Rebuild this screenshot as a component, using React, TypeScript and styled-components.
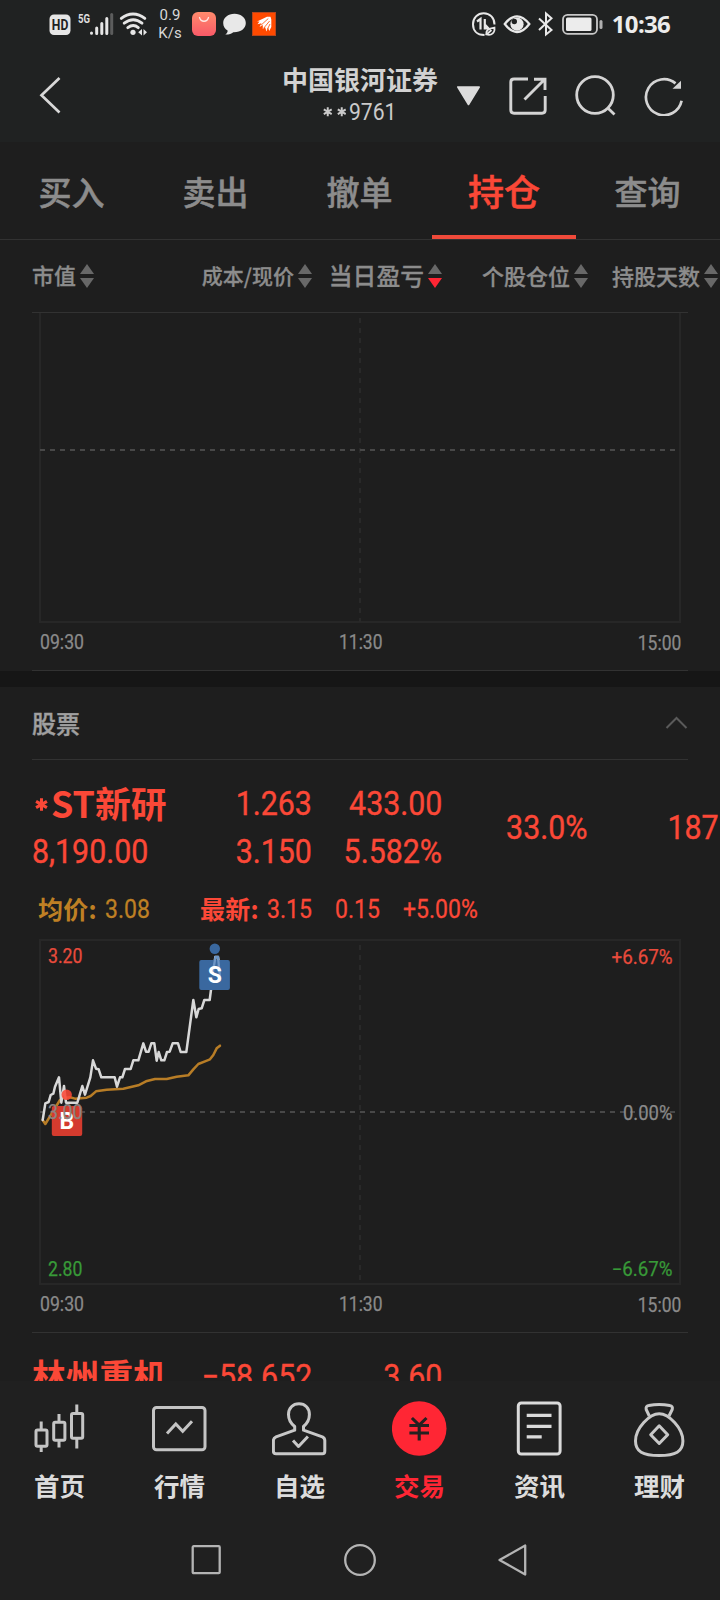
import React from "react";
import styled, { createGlobalStyle } from "styled-components";

const Global = createGlobalStyle`
  * { box-sizing: border-box; }
  html, body { margin: 0; padding: 0; background: #1e1e1e; }
  body { font-family: "Noto Sans CJK SC", sans-serif; overflow: hidden; }
  svg { display: block; flex: none; }
`;

const RED = "#fb4837";
const HOT = "#ff2634";
const NUM = `Roboto, "Noto Sans CJK SC", sans-serif`;

const Screen = styled.div`
  width: 720px;
  height: 1600px;
  display: flex;
  flex-direction: column;
  overflow: hidden;
  background: #1e1e1e;
  color: #8c8c8c;
`;

const StatusBar = styled.div`
  height: 48px;
  flex: none;
  display: flex;
  align-items: center;
  justify-content: space-between;
  padding: 0 50px 0 49px;
  background: #202222;
`;

const StatusGroup = styled.div`
  display: flex;
  align-items: center;
`;

const NetSpeed = styled.div`
  width: 24px;
  margin: 0 9px 0 11px;
  font: 400 15px/18px ${NUM};
  text-align: center;
  color: #d8d8d8;
`;

const Clock = styled.span`
  margin-left: 8px;
  font: 700 24px/28px "Noto Sans", sans-serif;
  letter-spacing: -0.7px;
  color: #ececec;
`;

const Header = styled.div`
  height: 94px;
  flex: none;
  display: flex;
  align-items: center;
  padding: 0 37px 0 38px;
  background: #202222;
`;

const Account = styled.div`
  width: 158px;
  margin-left: 219px;
  margin-right: 17px;
  padding-top: 1px;
  display: flex;
  flex-direction: column;
  align-items: center;
  white-space: nowrap;
`;

const Broker = styled.div`
  font-size: 26px;
  line-height: 32px;
  font-weight: 700;
  color: #d2d2d2;
`;

const AccountNo = styled.div`
  display: flex;
  align-items: center;
  gap: 4px;
  font: 400 24px/32px ${NUM};
  color: #cacaca;
  padding-top: 1px;
`;

const AccountDigits = styled.span`
  display: block;
  margin-left: -1px;
  margin-right: -6px;
  transform: scaleX(0.88);
  transform-origin: left center;
`;

const HeaderActions = styled.div`
  flex: 1;
  display: flex;
  align-items: center;
  justify-content: space-between;
  padding-top: 1px;
`;

const Tabs = styled.div`
  height: 98px;
  flex: none;
  display: grid;
  grid-template-columns: repeat(5, 144px);
  border-bottom: 1px solid #323232;
`;

const Tab = styled.div<{ $active?: boolean }>`
  display: flex;
  align-items: center;
  justify-content: center;
  font-size: ${(p) => (p.$active ? 36 : 33)}px;
  font-weight: 500;
  -webkit-text-stroke: 0.5px currentColor;
  padding: ${(p) => (p.$active ? "2px 0 0 0" : "0 1px 0 0")};
  color: ${(p) => (p.$active ? RED : "#8c8c8c")};
  border-bottom: ${(p) => (p.$active ? "4px solid #f04a3a" : "none")};
`;

const SortRow = styled.div`
  height: 72px;
  flex: none;
  display: grid;
  grid-template-columns: 162px 118px 130px 146px 130px;
  padding-left: 32px;
  align-items: center;
`;

const SortCell = styled.div<{ $size: number; $left?: boolean }>`
  display: flex;
  align-items: center;
  justify-content: ${(p) => (p.$left ? "flex-start" : "flex-end")};
  gap: 4px;
  white-space: nowrap;
  font-size: ${(p) => p.$size}px;
  line-height: 32px;
  font-weight: 500;
  -webkit-text-stroke: 0.3px currentColor;
`;

const SortLabel = styled.span`
  padding-bottom: 2px;
`;

const Panel = styled.div`
  flex: none;
  margin: 0 32px;
`;

const LinedPanel = styled(Panel)`
  border-top: 1px solid #323232;
  border-bottom: 1px solid #323232;
`;

const Rule = styled.div`
  height: 1px;
  margin: 0 32px;
  background: #323232;
`;

const Divider = styled.div`
  height: 16px;
  flex: none;
  background: #161616;
`;

const SectionHead = styled.div`
  height: 73px;
  flex: none;
  margin: 0 32px;
  display: flex;
  align-items: center;
  justify-content: space-between;
  border-bottom: 1px solid #323232;
  font-size: 24px;
  line-height: 36px;
  font-weight: 500;
  color: #a0a0a0;
`;

const SectionTitle = styled.span`
  -webkit-text-stroke: 0.4px currentColor;
`;

const Holding = styled.div`
  height: 116px;
  flex: none;
  display: grid;
  grid-template-columns: 162px 118px 130px 146px 131px;
  padding: 20px 0 0 32px;
  color: ${RED};
`;

const HoldingCol = styled.div<{ $left?: boolean; $middle?: boolean }>`
  height: 96px;
  display: flex;
  flex-direction: column;
  align-items: ${(p) => (p.$left ? "flex-start" : "flex-end")};
  justify-content: ${(p) => (p.$middle ? "center" : "flex-start")};
  white-space: nowrap;
`;

const StockName = styled.div<{ $size: number }>`
  display: flex;
  height: 48px;
  font-size: ${(p) => p.$size}px;
  line-height: 44px;
  font-weight: 700;
`;

const Star = styled.span`
  width: 19px;
  display: flex;
  align-items: center;
  justify-content: center;
`;

const Figure = styled.div<{ $left?: boolean }>`
  font: 400 33px/48px ${NUM};
  transform: scaleX(0.92);
  transform-origin: ${(p) => (p.$left ? "left" : "right")} center;
  -webkit-text-stroke: 0.4px currentColor;
`;

const QuoteLine = styled.div`
  height: 60px;
  flex: none;
  display: flex;
  align-items: center;
  padding: 6px 0 0 38px;
`;

const Quote = styled.div<{ $color: string; $width: number }>`
  width: ${(p) => p.$width}px;
  display: flex;
  align-items: center;
  gap: 8px;
  color: ${(p) => p.$color};
  white-space: nowrap;
`;

const QuoteLabel = styled.span`
  font: 700 25px/36px "Noto Sans CJK SC", sans-serif;
  letter-spacing: 0.2px;
  padding-bottom: 3px;
`;

const QuoteValue = styled.span`
  display: block;
  font: 400 25px/36px ${NUM};
  transform: scaleX(0.92);
  transform-origin: left center;
  padding-top: 1px;
  -webkit-text-stroke: 0.3px currentColor;
`;

const NextHolding = styled.div`
  height: 49px;
  flex: none;
  overflow: hidden;
`;

const BottomNav = styled.div`
  height: 139px;
  flex: none;
  display: flex;
  background: #202020;
`;

const NavItem = styled.div<{ $active?: boolean }>`
  flex: 1;
  display: flex;
  flex-direction: column;
  align-items: center;
  padding: 17px 1px 0 0;
  font-size: 25.5px;
  line-height: 36px;
  font-weight: 700;
  gap: 9px;
  color: ${(p) => (p.$active ? HOT : "#dcdcdc")};
`;

const SystemNav = styled.div`
  height: 80px;
  flex: none;
  display: flex;
  align-items: center;
  justify-content: center;
  gap: 121px;
  background: #202020;
`;

function StarMark({ size, color, weight }: { size: number; color: string; weight: number }) {
  return (
    <svg width={size} height={size} viewBox="0 0 12 12" stroke={color} strokeWidth={weight}>
      <path d="M6 0.3V11.7M1 3.1L11 8.9M11 3.1L1 8.9" />
    </svg>
  );
}

function SortArrows({ down }: { down?: boolean }) {
  return (
    <svg width="14" height="24" viewBox="0 0 14 24">
      <path d="M7 0L14 10H0Z" fill="#686868" />
      <path d="M0 14H14L7 24Z" fill={down ? HOT : "#686868"} />
    </svg>
  );
}

function LeftStatusIcons() {
  return (
    <>
      <svg width="98" height="30" viewBox="49 9 98 30">
        <rect x="49.5" y="14.5" width="21" height="20.5" rx="4.5" fill="#e6e6e6" />
        <text x="51.8" y="30.3" fontFamily="Roboto" fontSize="14" fontWeight="700" fill="#202222" textLength="16.5" lengthAdjust="spacingAndGlyphs">HD</text>
        <text x="78" y="23.2" fontFamily="Roboto" fontSize="13.5" fontWeight="700" fill="#dedede" textLength="12" lengthAdjust="spacingAndGlyphs">5G</text>
        <g strokeWidth="3" strokeLinecap="round" stroke="#e6e6e6">
          <path d="M91.5 33V33.2M96.7 28V33.4M101.8 23.4V33.4M106.8 18.5V33.4" />
          <path d="M111.7 14.5V33.4" stroke="#5c5d5d" />
        </g>
        <g fill="none" stroke="#e6e6e6" strokeWidth="2.9" strokeLinecap="round">
          <path d="M121.3 18.4C128.5 12.5 137.5 12.5 144.8 18.4" />
          <path d="M124.2 23.2C130 18.8 136.5 18.8 142 23.2" />
          <path d="M127.8 27.6C131.5 24.8 135 24.8 138.3 27.6" />
        </g>
        <circle cx="133" cy="32.3" r="2.6" fill="#e6e6e6" />
        <path d="M142 29V35.5L138.2 32.2ZM143.5 29L147 32.2L143.5 35.5Z" fill="#e6e6e6" />
      </svg>
      <NetSpeed>0.9 K/s</NetSpeed>
      <svg width="86" height="26" viewBox="191 11 86 26">
        <defs>
          <linearGradient id="bag" x1="0" y1="0" x2="0" y2="1">
            <stop offset="0" stopColor="#ff8a6c" />
            <stop offset="1" stopColor="#f95a68" />
          </linearGradient>
        </defs>
        <rect x="192" y="12" width="24" height="24" rx="6" fill="url(#bag)" />
        <path d="M199.5 17.5C201 22.5 207 22.5 208.5 17.5" fill="none" stroke="#ffe9e4" strokeWidth="1.3" strokeLinecap="round" />
        <path d="M234.5 13.8C228 13.8 223.2 17.8 223.2 23C223.2 26.5 225 29 227.6 30.5C227.8 32.3 226.8 33.6 225.3 34.5C228.8 34.6 231.5 33.8 233.3 32.2C240.5 32.5 245.8 28.6 245.8 23C245.8 17.8 241 13.8 234.5 13.8Z" fill="#e8e8e8" />
        <rect x="252.5" y="12.5" width="23" height="23" fill="#ff4a00" stroke="#b94419" />
        <path d="M257 21.5L267 16.8H270.5L271.3 19.5V27L269.3 31L268 27.5L266.5 31.5L265 27L262.8 29V25L259.5 27L261.5 23.2L257.5 24.3L259.5 21.5Z" fill="#fff" />
        <path d="M261 25.2L268.3 18.5M263.8 28L269.6 21M267.3 29.5L270 24" stroke="#ff4a00" strokeWidth=".8" />
      </svg>
    </>
  );
}

function RightStatusIcons() {
  return (
    <svg width="132" height="26" viewBox="471.5 11 132 26">
      <g fill="none" stroke="#e8e8e8" strokeWidth="2">
        <path d="M484 35C476 35 472.5 30 472.5 24.2C472.5 18 477 13.2 483.2 13.2C489.5 13.2 494 18 494 24.5" />
        <path d="M476.5 21.5L480 19V29.5M484.3 19V28.5H488L484.3 24.5" strokeWidth="2.2" />
        <path d="M486 35C485 30 488 28.5 494 27.5C494.5 32.5 491.5 36 486 34.5L491 30" strokeWidth="1.7" />
        <path d="M504.3 24C508.5 18.5 512.5 16.3 516.5 16.3C520.5 16.3 524.5 18.5 528.8 24C524.5 29.8 520.5 32 516.5 32C512.5 32 508.5 29.8 504.3 24Z" strokeWidth="2.3" />
        <path d="M538.5 18.5L551 30L545.5 34.5V13.5L551 18.3L538.5 30" strokeWidth="2" />
        <rect x="562.5" y="14.8" width="34" height="19" rx="4.5" stroke="#c8c8c8" strokeWidth="1.8" />
      </g>
      <circle cx="516.5" cy="24.2" r="6.6" fill="#e8e8e8" />
      <circle cx="513.8" cy="21.5" r="2.7" fill="#202222" />
      <rect x="565.5" y="17.5" width="25.5" height="13.6" rx="1.5" fill="#ececec" />
      <rect x="599" y="20" width="3" height="9" rx="1.5" fill="#b0b0b0" />
    </svg>
  );
}

interface ChartProps {
  height: number;
  top: number;
  mid: number;
  bottom: number;
  prices?: boolean;
}

const PRICE_POINTS =
  "68,600 76,550 86,546 92,525 100,521 105,500 117,472 124,548 132,498 138,548 172,548 187,498 195,524 211,472 219,421 228,446 236,448 244,472 284,472 291,500 300,472 307,472 315,447 332,447 340,421 355,421 370,370 378,395 386,395 394,370 403,370 410,422 416,396 424,421 433,421 441,396 449,395 458,370 474,370 482,396 499,396 520,240 529,292 536,267 545,265 553,240 569,240 586,111 594,111 597,130";
const AVERAGE_POINTS =
  "68,600 76,612 120,540 130,534 150,532 165,536 200,533 212,528 228,514 260,509 310,506 355,496 378,484 405,477 440,477 470,470 505,466 520,448 535,432 555,424 570,418 580,405 590,385 600,377";

interface LabelProps {
  x: number;
  y: number;
  w: number;
  color?: string;
  end?: boolean;
  children: string;
}

function ChartLabel({ x, y, w, color = "#8a8a8a", end, children }: LabelProps) {
  return (
    <text x={x} y={y} fill={color} stroke={color} strokeWidth="0.25" fontFamily="Roboto, sans-serif" fontSize="19.5" textLength={w} lengthAdjust="spacingAndGlyphs" textAnchor={end ? "end" : "start"}>
      {children}
    </text>
  );
}

function IntradayChart({ height, top, mid, bottom, prices }: ChartProps) {
  return (
    <svg width="656" height={height} viewBox={`32 0 656 ${height}`}>
      <rect x="40" y={top} width="640" height={bottom - top} fill="none" stroke="#272727" strokeWidth="2" />
      <path d={`M360 ${Math.max(top, 0) + 5}V${bottom}`} stroke="#292929" strokeWidth="2" strokeDasharray="5 5" />
      <path d={`M40 ${mid}H676`} stroke="#484848" strokeWidth="2" strokeDasharray="5 5" />
      {prices && (
        <>
          <g transform="translate(20 -16) scale(.33333)" fill="none" strokeWidth="7.5" strokeLinejoin="round" strokeLinecap="round">
            <polyline points={AVERAGE_POINTS} stroke="#b87d26" />
            <polyline points={PRICE_POINTS} stroke="#d8d8d8" />
          </g>
          <circle cx="214.8" cy="12.7" r="5.2" fill="#3a689f" />
          <rect x="199.3" y="24" width="30.6" height="30" rx="2" fill="#3a689f" />
          <path d="M212.5 38L215.5 21H218L220 41" fill="none" stroke="#6d96c6" strokeWidth="2.3" />
          <text x="214.8" y="47" textAnchor="middle" fontFamily="Roboto" fontWeight="700" fontSize="23" fill="#fff">S</text>
          <circle cx="66.7" cy="158.7" r="5.2" fill="#fb4837" fillOpacity=".88" />
          <rect x="51.8" y="170" width="30.4" height="30" rx="2" fill="#d43b2e" />
          <text x="66.8" y="193" textAnchor="middle" fontFamily="Roboto" fontWeight="700" fontSize="23" fill="#fff">B</text>
          <ChartLabel x={48} y={27} w={34.5} color="#e94b3c">3.20</ChartLabel>
          <ChartLabel x={48} y={183} w={34.5} color="#8f8480">3.00</ChartLabel>
          <ChartLabel x={48} y={340} w={34.5} color="#389a38">2.80</ChartLabel>
          <ChartLabel x={672.5} y={28} w={61} color="#e94b3c" end>+6.67%</ChartLabel>
          <ChartLabel x={672.5} y={184} w={49.5} end>0.00%</ChartLabel>
          <ChartLabel x={672.5} y={340} w={61} color="#389a38" end>−6.67%</ChartLabel>
        </>
      )}
      <ChartLabel x={40} y={bottom + 27.3} w={44}>09:30</ChartLabel>
      <ChartLabel x={339} y={bottom + 27.3} w={43.5}>11:30</ChartLabel>
      <ChartLabel x={681.3} y={bottom + 28.3} w={43.5} end>15:00</ChartLabel>
    </svg>
  );
}

function HeaderIcons() {
  return (
    <HeaderActions>
      <svg width="25" height="20" viewBox="0 0 25 20">
        <path d="M1.8 1H23.2L12.5 18.5Z" fill="#dcdcdc" stroke="#dcdcdc" strokeWidth="1.6" strokeLinejoin="round" />
      </svg>
      <svg width="38" height="38" viewBox="0 0 38 38" fill="none" stroke="#d4d4d4" strokeWidth="2.9">
        <path d="M19 2H5Q1.8 2 1.8 5V33Q1.8 36.2 5 36.2H33Q36.2 36.2 36.2 33V19" />
        <path d="M25 2.2H36V13M35.5 2.5L15.5 22.5" />
      </svg>
      <svg width="41" height="41" viewBox="0 0 41 41" fill="none" stroke="#d4d4d4" strokeWidth="2.8">
        <circle cx="20" cy="20" r="18.3" />
        <path d="M32.8 33L39.5 39.5" />
      </svg>
      <svg width="39" height="40" viewBox="0 0 39 40">
        <path d="M31.5 7.4A18 18 0 1 0 37.6 24.8" fill="none" stroke="#d4d4d4" strokeWidth="2.7" />
        <path d="M28.5 12.8L37 4.8V12.8Z" fill="#d4d4d4" />
      </svg>
    </HeaderActions>
  );
}

const NAV_ICONS: React.ReactNode[] = [
  <g stroke="#c4c4c4" strokeWidth="3">
    <path d="M9.2 20.5V28.5M9.2 44V51M27 13V20.5M27 38.5V46.5M44.8 3.5V12M44.8 36V47.5" />
    <rect x="4" y="29" width="11" height="16.3" rx="1.5" />
    <rect x="21.7" y="21.3" width="11.2" height="18" rx="1.5" />
    <rect x="39.5" y="12.5" width="11.2" height="24.7" rx="1.5" />
  </g>,
  <g stroke="#c4c4c4" strokeWidth="3">
    <rect x="1.5" y="6.5" width="51.5" height="42.2" rx="3" />
    <path d="M15 32.5L23.8 23L30.7 30.3L40 20.3" />
  </g>,
  <g stroke="#c8c8c8" strokeWidth="3" strokeLinejoin="round">
    <path d="M22.7 29.2V25.5C18.2 22 16.5 18 16.5 13.5C16.5 7 20.9 2.8 27 2.8C33.2 2.8 37.4 7 37.4 13.5C37.4 18 35.7 22 31.5 25.5V29.2L50.4 35.8Q52.8 37 52.8 39.5V50Q52.8 52.8 50.4 52.8H4Q1.4 52.8 1.4 50V39.5Q1.4 37 4 35.8Z" />
    <path d="M21 39.5L26.5 45.5L35.9 35.5" />
  </g>,
  <g>
    <circle cx="27.2" cy="27.5" r="27.3" fill={HOT} />
    <path d="M19.9 17L27.2 24L34.5 17M17.4 24.5H37M17.4 32H37M27.2 24V39.5" stroke="#252020" strokeWidth="3.1" />
  </g>,
  <g stroke="#dadada" strokeWidth="3">
    <rect x="6.3" y="2" width="41.8" height="51" rx="3" />
    <path d="M14.7 14.3H39.5M14.7 25.3H39.5M14.7 35.8H29.7" strokeWidth="3.2" />
  </g>,
  <g stroke="#c8c8c8" strokeWidth="3" strokeLinejoin="round">
    <path d="M17.3 15L14.2 8.5Q13.5 5 16.7 4.5Q27.2 2.5 37.7 4.5Q41.2 5 40.2 8.5L37 15" />
    <path d="M27.2 12.8C36.7 12.8 50.9 27 50.9 40C50.9 50.5 43.7 54.5 27.2 54.5C10.7 54.5 3.5 50.5 3.5 40C3.5 27 17.7 12.8 27.2 12.8Z" />
    <path d="M27.2 24.8L35.7 33.7L27.2 42.5L18.7 33.7Z" />
  </g>,
];

const NAV_LABELS = ["首页", "行情", "自选", "交易", "资讯", "理财"];

export default function App() {
  return (
    <>
      <Global />
      <Screen>
        <StatusBar>
          <StatusGroup>
            <LeftStatusIcons />
          </StatusGroup>
          <StatusGroup>
            <RightStatusIcons />
            <Clock>10:36</Clock>
          </StatusGroup>
        </StatusBar>
        <Header>
          <svg width="24" height="38" viewBox="0 0 24 38" fill="none" stroke="#d8d8d8" strokeWidth="2.7">
            <path d="M21.5 2L3.5 19.3L21.5 36.5" />
          </svg>
          <Account>
            <Broker>中国银河证券</Broker>
            <AccountNo>
              <StarMark size={9.5} color="#cacaca" weight={2.5} />
              <StarMark size={9.5} color="#cacaca" weight={2.5} />
              <AccountDigits>9761</AccountDigits>
            </AccountNo>
          </Account>
          <HeaderIcons />
        </Header>
        <Tabs>
          {["买入", "卖出", "撤单", "持仓", "查询"].map((t) => (
            <Tab key={t} $active={t === "持仓"}>{t}</Tab>
          ))}
        </Tabs>
        <SortRow>
          <SortCell $size={21.9} $left><SortLabel>市值</SortLabel><SortArrows /></SortCell>
          <SortCell $size={21}><SortLabel>成本/现价</SortLabel><SortArrows /></SortCell>
          <SortCell $size={23.8}><SortLabel>当日盈亏</SortLabel><SortArrows down /></SortCell>
          <SortCell $size={22}><SortLabel>个股仓位</SortLabel><SortArrows /></SortCell>
          <SortCell $size={22}><SortLabel>持股天数</SortLabel><SortArrows /></SortCell>
        </SortRow>
        <LinedPanel>
          <IntradayChart height={357} top={-2} mid={137} bottom={309} />
        </LinedPanel>
        <Divider />
        <SectionHead>
          <SectionTitle>股票</SectionTitle>
          <svg width="23" height="14" viewBox="0 0 23 14" fill="none" stroke="#5a5a5a" strokeWidth="2">
            <path d="M1.5 12L11.5 2L21.5 12" />
          </svg>
        </SectionHead>
        <Holding>
          <HoldingCol $left>
            <StockName $size={35.8}>
              <Star><StarMark size={13} color={RED} weight={2.8} /></Star>
              ST新研
            </StockName>
            <Figure $left>8,190.00</Figure>
          </HoldingCol>
          <HoldingCol>
            <Figure>1.263</Figure>
            <Figure>3.150</Figure>
          </HoldingCol>
          <HoldingCol>
            <Figure>433.00</Figure>
            <Figure>5.582%</Figure>
          </HoldingCol>
          <HoldingCol $middle>
            <Figure>33.0%</Figure>
          </HoldingCol>
          <HoldingCol $middle>
            <Figure>187</Figure>
          </HoldingCol>
        </Holding>
        <QuoteLine>
          <Quote $color="#bf8024" $width={162}><QuoteLabel>均价:</QuoteLabel><QuoteValue>3.08</QuoteValue></Quote>
          <Quote $color={RED} $width={135}><QuoteLabel>最新:</QuoteLabel><QuoteValue>3.15</QuoteValue></Quote>
          <Quote $color={RED} $width={68}><QuoteValue>0.15</QuoteValue></Quote>
          <Quote $color={RED} $width={90}><QuoteValue>+5.00%</QuoteValue></Quote>
        </QuoteLine>
        <Panel>
          <IntradayChart height={396} top={4} mid={176} bottom={348} prices />
        </Panel>
        <NextHolding>
          <Rule />
          <Holding>
            <HoldingCol $left>
              <StockName $size={33.7}>林州重机</StockName>
            </HoldingCol>
            <HoldingCol>
              <Figure>−58.652</Figure>
            </HoldingCol>
            <HoldingCol>
              <Figure>3.60</Figure>
            </HoldingCol>
          </Holding>
        </NextHolding>
        <BottomNav>
          {NAV_LABELS.map((label, i) => (
            <NavItem key={label} $active={i === 3}>
              <svg width="55" height="60" viewBox="0 -3 55 60" fill="none">{NAV_ICONS[i]}</svg>
              {label}
            </NavItem>
          ))}
        </BottomNav>
        <SystemNav>
          <svg width="32" height="32" viewBox="0 0 32 32" fill="none" stroke="#b4b4b4" strokeWidth="2.3">
            <rect x="1.7" y="2.2" width="27" height="27" rx="1" />
          </svg>
          <svg width="32" height="32" viewBox="0 0 32 32" fill="none" stroke="#b4b4b4" strokeWidth="2.3">
            <circle cx="16" cy="16" r="14.8" />
          </svg>
          <svg width="32" height="32" viewBox="0 0 32 32" fill="none" stroke="#b4b4b4" strokeWidth="2.3" strokeLinejoin="round">
            <path d="M28.2 1.5V30.5L2.5 16Z" />
          </svg>
        </SystemNav>
      </Screen>
    </>
  );
}
